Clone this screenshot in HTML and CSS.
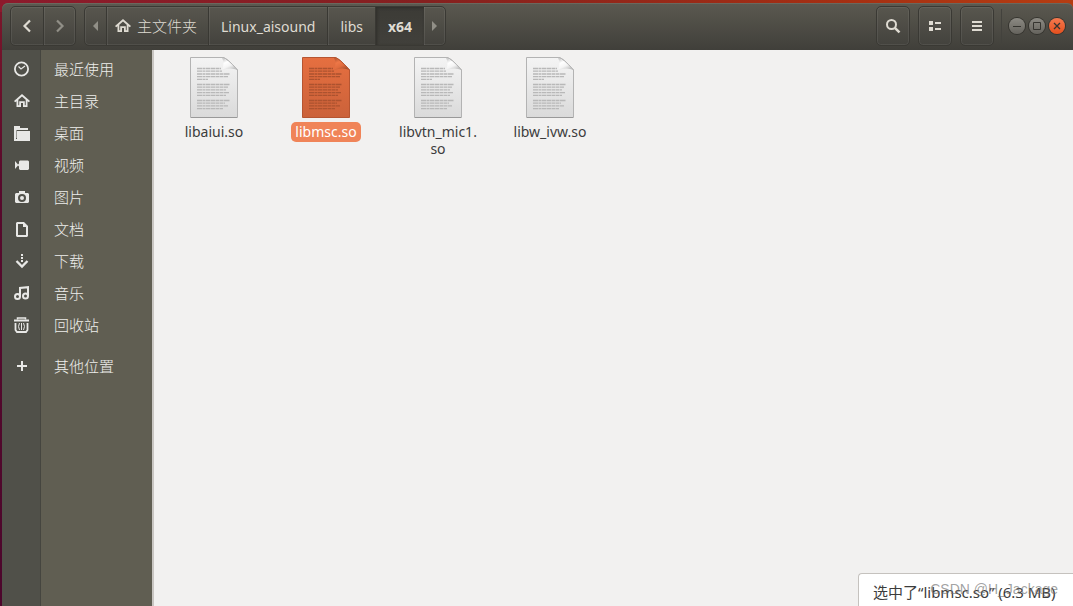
FILE: index.html
```html
<!DOCTYPE html>
<html lang="zh-CN">
<head>
<meta charset="utf-8">
<title>x64</title>
<link rel="stylesheet" href="styles.css">
</head>
<body>
<svg class="sprite" aria-hidden="true">
  <defs>
    <linearGradient id="paper" x1="0" y1="0" x2="0" y2="1"><stop offset="0" stop-color="#f4f4f4"/><stop offset="1" stop-color="#dadada"/></linearGradient>
    <linearGradient id="paper-active" x1="0" y1="0" x2="0" y2="1"><stop offset="0" stop-color="#e66f40"/><stop offset="1" stop-color="#cb623a"/></linearGradient>
    <linearGradient id="fold" x1="0" y1="0" x2=".6" y2="1"><stop offset="0" stop-color="#b8b8b8"/><stop offset=".4" stop-color="#ffffff"/><stop offset=".7" stop-color="#f4f4f4"/><stop offset="1" stop-color="#c4c4c4"/></linearGradient>
    <linearGradient id="fold-active" x1="0" y1="0" x2=".6" y2="1"><stop offset="0" stop-color="#a9502d"/><stop offset=".4" stop-color="#ee7747"/><stop offset=".7" stop-color="#e06c3e"/><stop offset="1" stop-color="#a9502d"/></linearGradient>
  </defs>
  <symbol id="home" viewBox="0 0 16 16"><path d="M8 1 0 8l1.2 1.3L2.500 8.200V14H7v-4h2v4h4.500V8.200l1.300 1.100L16 8ZM8 3.500l3.700 3.200V12.200H10.800V8.200H5.200v4H4.300V6.700Z" fill="currentColor"/></symbol>
  <symbol id="lines" viewBox="0 0 48 61"><g fill="none" stroke="currentColor" stroke-width="1.300" stroke-dasharray="5 .5 3 .5 4 .5"><path d="M7 11.500h24M7 14.200h25M7 17h33M7 19.700h31M7 22.300h11M7 27.500h33M7 30.200h31M7 32.900h29M7 35.600h32M7 38.300h29M7 43.500h33M7 46.200h28M7 48.900h31M7 51.600h26"/></g></symbol>
  <symbol id="doc" viewBox="0 0 48 61"><path d="M.5.5H33Q37 1 47.500 13V60.500H.5Z" fill="url(#paper)" stroke="#b3b3b3"/><path d="M1 60.500h46" stroke="#999"/><use href="#lines" color="#b8b8b8"/><path d="M32 .5Q35 7 32 13Q41 10 47.500 13Q39 3 32 .5Z" fill="url(#fold)"/><path d="M33 .5Q37 1 47.500 13" fill="none" stroke="#b3b3b3"/></symbol>
  <symbol id="doc-active" viewBox="0 0 48 61"><path d="M.5.5H33Q37 1 47.500 13V60.500H.5Z" fill="url(#paper-active)" stroke="#b65531"/><use href="#lines" color="#ac522f"/><path d="M32 .5Q35 7 32 13Q41 10 47.500 13Q39 3 32 .5Z" fill="url(#fold-active)"/><path d="M33 .5Q37 1 47.500 13" fill="none" stroke="#b65531"/></symbol>
</svg>
<div class="window">
  <header class="header">
    <nav class="group" aria-label="导航">
      <button class="nav-btn" aria-label="后退"><svg class="icon" viewBox="0 0 16 16"><path d="M11 2.500 5.500 8l5.500 5.500" fill="none" stroke="currentColor" stroke-width="2.200"/></svg></button>
      <button class="nav-btn dim" aria-label="前进"><svg class="icon" viewBox="0 0 16 16"><path d="m5 2.500 5.500 5.500L5 13.500" fill="none" stroke="currentColor" stroke-width="2.200"/></svg></button>
    </nav>
    <nav class="group" aria-label="路径">
      <button class="arrow dim" aria-label="向左滚动"><svg class="icon" viewBox="0 0 16 16"><path d="M10 3v10L5 8Z" fill="currentColor"/></svg></button>
      <button class="crumb home-crumb"><svg class="icon"><use href="#home"/></svg>主文件夹</button>
      <button class="crumb">Linux_aisound</button>
      <button class="crumb">libs</button>
      <button class="crumb current">x64</button>
      <button class="arrow dim" aria-label="向右滚动"><svg class="icon" viewBox="0 0 16 16"><path d="M5 3v10l5-5Z" fill="currentColor"/></svg></button>
    </nav>
    <div class="tools">
      <button class="tool" aria-label="搜索"><svg class="icon" viewBox="0 0 16 16"><g fill="none" stroke="currentColor"><circle cx="6.500" cy="6.500" r="4.500" stroke-width="2"/><path d="m9.800 9.800 4.700 4.500" stroke-width="2.500"/></g></svg></button>
      <button class="tool" aria-label="列表视图"><svg class="icon" viewBox="0 0 16 16"><path d="M2 3h4v4H2ZM2 9h4v4H2ZM8 4h6v2H8ZM8 10h6v2H8Z" fill="currentColor"/></svg></button>
      <button class="tool" aria-label="菜单"><svg class="icon" viewBox="0 0 16 16"><path d="M3 3h10v2H3ZM3 7h10v2H3ZM3 11h10v2H3Z" fill="currentColor"/></svg></button>
    </div>
    <div class="controls">
      <button class="control" aria-label="最小化"><svg class="icon" viewBox="0 0 16 16"><path d="M4 8.500h8" stroke="currentColor"/></svg></button>
      <button class="control" aria-label="最大化"><svg class="icon" viewBox="0 0 16 16"><path d="M4.500 4.500h7v7h-7Z" fill="none" stroke="currentColor"/></svg></button>
      <button class="control close" aria-label="关闭"><svg class="icon" viewBox="0 0 16 16"><path d="m5 5 6 6m0-6-6 6" stroke="currentColor" stroke-width="1.300"/></svg></button>
    </div>
  </header>
  <div class="content">
    <aside class="sidebar">
      <a class="place" href="#"><span class="place-icon"><svg class="icon" viewBox="0 0 16 16"><g fill="none" stroke="currentColor"><circle cx="7.500" cy="8" r="6.600" stroke-width="1.800"/><path d="m4.500 5.500 2.500 2.500 4-3" stroke-width="1.200"/></g></svg></span>最近使用</a>
      <a class="place" href="#"><span class="place-icon"><svg class="icon"><use href="#home"/></svg></span>主目录</a>
      <a class="place" href="#"><span class="place-icon"><svg class="icon" viewBox="0 0 16 16"><path d="M0 1h6v2h8v2H2.500v8H2v2H0ZM3 6h13v10H0v-2h3Z" fill="currentColor"/></svg></span>桌面</a>
      <a class="place" href="#"><span class="place-icon"><svg class="icon" viewBox="0 0 16 16"><path d="M5 4.500 6 3.500h8l1 1V12l-1 1H6l-1-1V9.500L4 8.500 1 12V4l3 3.500 1-1Z" fill="currentColor"/></svg></span>视频</a>
      <a class="place" href="#"><span class="place-icon"><svg class="icon" viewBox="0 0 16 16"><path fill-rule="evenodd" d="M5 2h6v2h3l1 1v8l-1 1H2l-1-1V5l1-1h3ZM8 5a4 4 0 1 0 0 8 4 4 0 1 0 0-8Zm0 2a2 2 0 1 1 0 4 2 2 0 1 1 0-4Z" fill="currentColor"/></svg></span>图片</a>
      <a class="place" href="#"><span class="place-icon"><svg class="icon" viewBox="0 0 16 16"><path fill-rule="evenodd" d="M3 1h7l4 4v10l-1 1H3l-1-1V2ZM4 3v11h8V6H9V3Z" fill="currentColor"/></svg></span>文档</a>
      <a class="place" href="#"><span class="place-icon"><svg class="icon" viewBox="0 0 16 16"><path d="M7 1h2v2H7ZM7 4h2v2H7ZM7 7h2v2H7Z" fill="currentColor"/><path d="m2.500 8 5.500 5.500L13.500 8" fill="none" stroke="currentColor" stroke-width="2.300"/></svg></span>下载</a>
      <a class="place" href="#"><span class="place-icon"><svg class="icon" viewBox="0 0 16 16"><g fill="none" stroke="currentColor" stroke-width="2"><circle cx="3.500" cy="11.500" r="2.500"/><circle cx="11.500" cy="11" r="2.500"/><path d="M6 11.500V3l8-.8V11"/></g></svg></span>音乐</a>
      <a class="place" href="#"><span class="place-icon"><svg class="icon" viewBox="0 0 16 16"><g fill="none" stroke="currentColor"><path d="M3.500 2.500V1h8v1.500" stroke-width="1.500"/><path d="M0 3.500h15" stroke-width="2"/><path d="M1.500 6v7l1.500 2h9l1.500-2V6" stroke-width="1.800"/><path d="M7.500 6v7M5.500 6q-2 3.500 0 7M9.500 6q2 3.500 0 7"/></g></svg></span>回收站</a>
      <a class="place other" href="#"><span class="place-icon"><svg class="icon" viewBox="0 0 16 16"><path d="M8 3v10M3 8h10" stroke="currentColor" stroke-width="2"/></svg></span>其他位置</a>
    </aside>
    <main class="files">
      <figure class="file"><svg class="thumb"><use href="#doc"/></svg><figcaption class="name">libaiui.so</figcaption></figure>
      <figure class="file"><svg class="thumb"><use href="#doc-active"/></svg><figcaption class="name selected">libmsc.so</figcaption></figure>
      <figure class="file"><svg class="thumb"><use href="#doc"/></svg><figcaption class="name">libvtn_mic1.<wbr>so</figcaption></figure>
      <figure class="file"><svg class="thumb"><use href="#doc"/></svg><figcaption class="name">libw_ivw.so</figcaption></figure>
      <div class="status" role="status">选中了“libmsc.so” (6.3 MB)</div>
      <div class="watermark">CSDN @H_Jackage</div>
    </main>
  </div>
</div>
</body>
</html>
```
FILE: styles.css
```css
* { box-sizing: border-box; }
body {
  margin: 0;
  min-height: 100vh;
  padding: 3px 0 0 2px;
  display: flex;
  background: linear-gradient(90deg, #8c1a2c, #85201f 40%, #a63012 80%, #b53d12) 0 0 / 100% 12px no-repeat, linear-gradient(#7d172a, #57092b 30%, #4c062c);
  font: 14px/17px "Noto Sans", "Noto Sans CJK SC", sans-serif;
  color: #3c3c3c;
}
button { margin: 0; padding: 0; border: 0; background: none; color: inherit; font: inherit; }
.sprite { position: absolute; width: 0; height: 0; }
.icon { display: block; width: 16px; height: 16px; flex: none; }
.window { flex: 1; min-width: 0; display: flex; flex-direction: column; }
.header {
  display: flex;
  align-items: center;
  height: 47px;
  padding: 0 8px 1px;
  border-radius: 6px 6px 0 0;
  background: linear-gradient(#5b5950, #403f3a);
  box-shadow: inset 0 1px #6a685e;
  color: #dfdbd2;
}
.group, .tool {
  height: 40px;
  border: 1px solid #3a3934;
  border-radius: 5px;
  background: linear-gradient(#58564e, #43423d);
  box-shadow: inset 0 0 0 1px rgba(255, 255, 255, .07);
}
.group { display: flex; margin-right: 8px; }
.group > button { display: flex; align-items: center; justify-content: center; }
.group > button + button { border-left: 1px solid #393833; box-shadow: inset 1px 0 rgba(255, 255, 255, .08); }
.nav-btn { width: 32px; }
.arrow { width: 21px; }
.dim { color: #918f87; }
.group > .crumb { padding: 0 12px; }
.group > .home-crumb { gap: 6px; padding: 0 11px 0 8px; font-size: 15px; font-weight: 300; }
.group > .current { background: linear-gradient(#3c3b36, #41403b); font-weight: bold; box-shadow: inset 1px 1px 3px #2f2e2a; }
.group > .current + .arrow { border-left: 0; }
.tools { display: flex; gap: 8px; margin-left: auto; }
.tool { width: 34px; display: flex; align-items: center; justify-content: center; }
.controls {
  display: flex;
  align-items: center;
  gap: 4px;
  height: 34px;
  margin-left: 7px;
  padding-left: 7px;
  border-left: 1px solid #43423d;
}
.control { width: 16px; height: 16px; border-radius: 50%; background: linear-gradient(#8c8a83, #65635d); color: #35342f; box-shadow: 0 0 0 1px #35342f; }
.close { background: linear-gradient(#f5794f, #e44f1d); }
.content { flex: 1; display: flex; }
.sidebar {
  width: 152px;
  padding-top: 3px;
  border-right: 2px solid #c9c6c2;
  background: linear-gradient(90deg, #505049 38px, #45453f 38px, #45453f 39px, #605e52 39px);
}
.place { display: flex; align-items: center; height: 32px; color: #eeeeec; font-size: 15px; font-weight: 300; text-decoration: none; }
.place-icon { width: 39px; margin-right: 13px; padding-left: 12px; color: #e8e8e6; }
.other { margin-top: 9px; }
.files {
  position: relative;
  flex: 1;
  display: grid;
  grid-template-columns: repeat(auto-fill, 112px);
  align-content: start;
  padding: 7px 4px;
  background: #f2f1f0;
}
.file { margin: 0; display: flex; flex-direction: column; align-items: center; }
.thumb { width: 48px; height: 61px; }
.name { max-width: 92px; margin-top: 4px; padding: 1px 4px 2px; border-radius: 5px; text-align: center; }
.selected { background: #f08458; color: #fff; }
.status {
  position: absolute;
  right: 0;
  bottom: 0;
  width: 215px;
  height: 33px;
  padding: 10px 0 0 14px;
  border: 1px solid #c5c2be;
  border-width: 1px 0 0 1px;
  border-radius: 4px 0 0 0;
  background: #fff;
  font-size: 15px;
  white-space: nowrap;
}
.watermark { position: absolute; right: 15px; bottom: 8px; color: rgba(110, 110, 110, .65); font: 14px/17px "Liberation Sans", sans-serif; }
```
